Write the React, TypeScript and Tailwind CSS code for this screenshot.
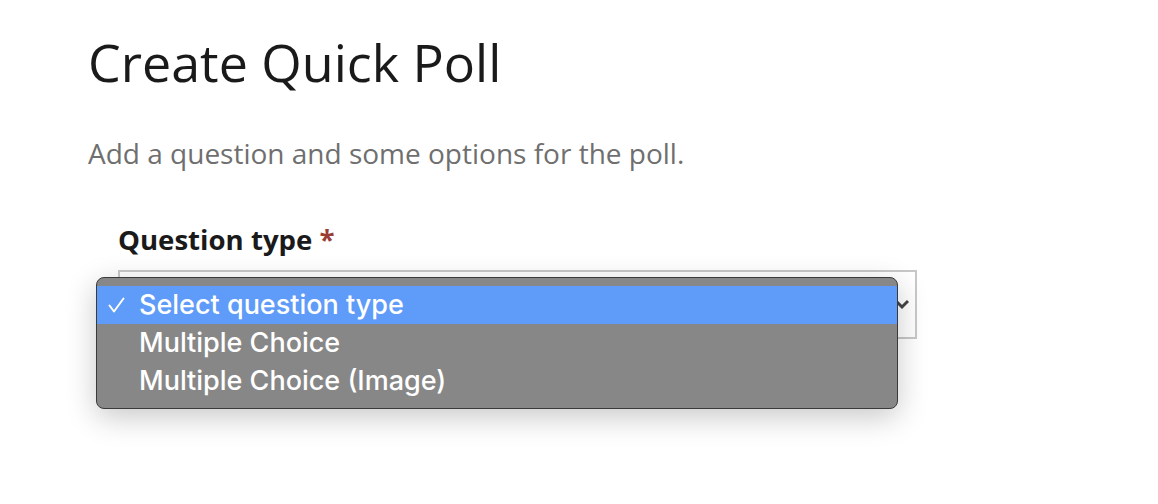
import React from "react";

export default function App() {
  const sys = { fontFamily: "Inter, 'Liberation Sans', sans-serif" };
  return (
    <div className="w-[1158px] h-[504px] bg-white overflow-hidden" style={{ fontFamily: "'Open Sans', 'Noto Sans', sans-serif" }}>
      <div className="pl-[88px] pt-[27px]">
        <h1 className="text-[52px] leading-[70px] text-[#1a1a1a] font-normal">Create Quick Poll</h1>
        <p className="mt-[38px] text-[28px] leading-[36px] text-[#6f6f6f]">Add a question and some options for the poll.</p>
        <div className="pl-[30px] mt-[50px]">
          <label className="block text-[27.6px] leading-[36px] font-bold text-[#1a1a1a]">
            Question type <span className="text-[#9b3d35]">*</span>
          </label>
          <div className="relative mt-[13px] w-[799px] h-[69px] border-2 border-[#c8c8c8] bg-white">
            <svg className="absolute right-[6px] top-[26px]" width="14" height="12" viewBox="0 0 14 12">
              <path d="M1 3 L7 9 L13 3" stroke="#444" strokeWidth="3" fill="none" />
            </svg>
            <div
              className="absolute left-[-24px] top-[5px] w-[802px] rounded-[8px] border border-[#3a3a3a] bg-[#878787] py-[8px] shadow-[0_8px_30px_rgba(0,0,0,0.22)]"
              style={sys}
            >
              <div className="flex items-center h-[38px] bg-[#5f9bf8] text-white text-[27px] font-medium">
                <span className="w-[42px] pl-[11px] flex items-center">
                  <svg width="17" height="17" viewBox="0 0 17 17">
                    <path d="M1.5 8.5 L6 14.5 L15.5 1.5" stroke="white" strokeWidth="2" fill="none" strokeLinecap="round" strokeLinejoin="round" />
                  </svg>
                </span>
                <span>Select question type</span>
              </div>
              <div className="flex items-center h-[38px] text-white text-[27px] font-medium">
                <span className="w-[42px]" />
                <span>Multiple Choice</span>
              </div>
              <div className="flex items-center h-[38px] text-white text-[27px] font-medium">
                <span className="w-[42px]" />
                <span>Multiple Choice (Image)</span>
              </div>
            </div>
          </div>
        </div>
      </div>
    </div>
  );
}
